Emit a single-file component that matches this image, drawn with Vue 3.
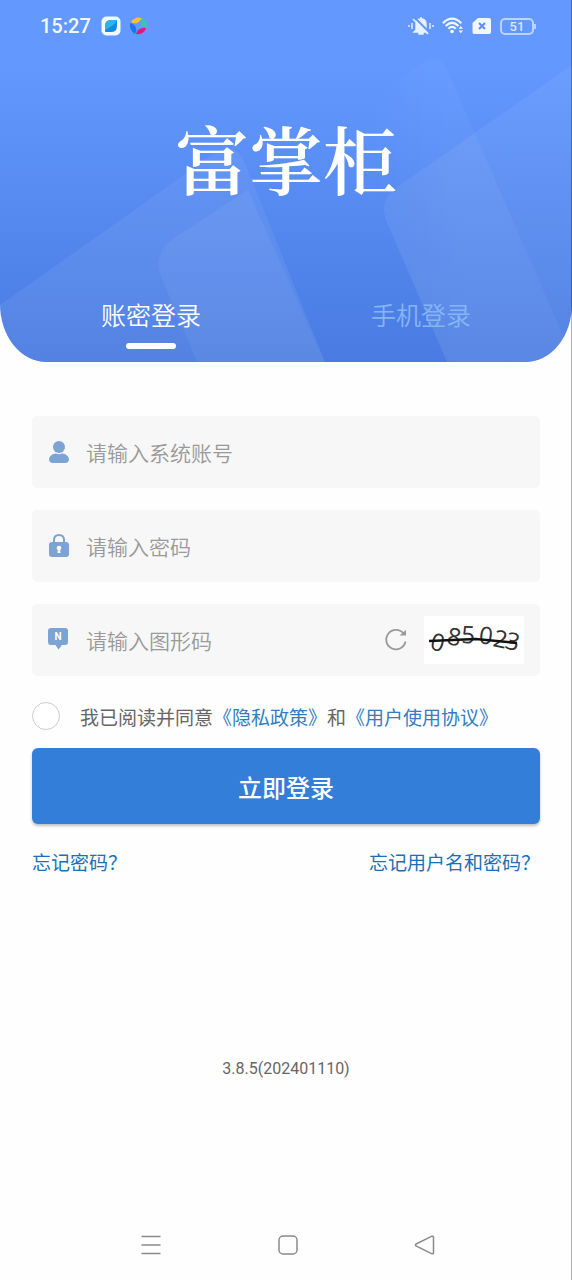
<template>
  <div class="page">
    <header class="hero">
      <svg class="hero-shapes" viewBox="0 0 572 362" preserveAspectRatio="none" aria-hidden="true">
        <defs>
          <linearGradient id="fade" gradientUnits="userSpaceOnUse" x1="365" y1="0" x2="460" y2="0">
            <stop offset="0" stop-color="#fff" stop-opacity="0" />
            <stop offset="1" stop-color="#fff" stop-opacity="0.04" />
          </linearGradient>
        </defs>
        <path d="M0 305 L215 153 Q236 140 246 166 L325 362 H0Z" fill="#fff" fill-opacity="0.06" />
        <path d="M197 362 L161 277 Q152 253 174 238 L248 190 L325 362Z" fill="#fff" fill-opacity="0.05" />
        <path d="M365 103 L423 62 Q439 52 448 72 L562 333 L572 362 H447 L386 220 Z" fill="url(#fade)" />
        <path d="M572 65 L396 188 Q379 201 386 220 L447 362 H572Z" fill="#fff" fill-opacity="0.06" />
      </svg>

      <div class="status-bar">
        <div class="status-group">
          <span class="clock">15:27</span>
          <svg width="20" height="20" viewBox="0 0 20 20">
            <rect x="0.5" y="0.5" width="19" height="19" rx="5" fill="#f2faff" />
            <path d="M4 10 Q4 4 10 4 H16 V10 Q16 16 10 16 H5 Q4 16 4 15Z" fill="#1688e0" />
            <path d="M4 10 Q4 4 10 4 H16 Q14 9 4 14Z" fill="#32b3e6" />
          </svg>
          <svg width="20" height="20" viewBox="0 0 20 20">
            <path d="M2 6 Q6 0 13 2 Q11 6 8 7 Q5 8 2 6Z" fill="#fdc02f" />
            <path d="M13 2 Q19 5 18 12 Q14 12 12 8 Q11 5 13 2Z" fill="#35c9b5" />
            <path d="M1 7 Q6 8 7 12 Q8 15 6 18 Q0 14 1 7Z" fill="#1677f2" />
            <path d="M17 12 Q15 19 7 18 Q8 14 11 13 Q14 11 17 12Z" fill="#ec1278" />
          </svg>
        </div>
        <div class="status-group status-right">
          <svg width="26" height="20" viewBox="0 0 26 20" fill="none" stroke="#e9f1ff" stroke-width="1.4">
            <path d="M8 14 V8 Q8 3 13 3 Q18 3 18 8 V14 L20 16 H6Z M11 17 H15 V18 H11Z M12 2 H14" fill="#e9f1ff" />
            <path d="M6 1 L22 17" stroke="#6298ff" stroke-width="2" />
            <path d="M5 3 L20 18" stroke-width="1.6" />
            <path d="M4 7 V13 M1 9 V11 M22 7 V13 M25 9 V11" />
          </svg>
          <svg width="22" height="20" viewBox="0 0 24 20" fill="none" stroke="#f1f6ff" stroke-width="2.4">
            <path d="M1 7 Q11 -3 21 7 M4 10 Q11 3 18 10 M7 13 Q11 9 15 13" />
            <circle cx="11" cy="16" r="2" fill="#f1f6ff" stroke="none" />
            <path d="M18 13 L20.5 10 L23 13Z M18 15 H23 L20.5 18Z" fill="#f1f6ff" stroke="none" />
          </svg>
          <svg width="20" height="18" viewBox="0 0 20 18">
            <path d="M6 1 H17 Q19 1 19 3 V15 Q19 17 17 17 H2 Q0.5 17 0.5 15 V6Z" fill="#f1f6ff" />
            <path d="M7 6 L13 12 M13 6 L7 12" stroke="#5c8fee" stroke-width="2" />
          </svg>
          <span class="battery">51</span>
        </div>
      </div>

      <h1 class="logo">富掌柜</h1>

      <nav class="tabs">
        <button
          v-for="tab in tabs"
          :key="tab.id"
          type="button"
          class="tab"
          :class="{ active: activeTab === tab.id }"
          @click="activeTab = tab.id"
        >
          {{ tab.label }}
        </button>
      </nav>
    </header>

    <form class="login-form" @submit.prevent>
      <div class="field">
        <label for="account" aria-label="系统账号">
          <svg width="22" height="24" viewBox="0 0 22 24" fill="#7ba3d3">
            <circle cx="11" cy="7" r="6" />
            <path d="M1 19 Q2 14 8 13.5 Q11 15 14 13.5 Q20 14 21 19 Q21 23 17 23 H5 Q1 23 1 19Z" />
          </svg>
        </label>
        <input id="account" v-model="account" type="text" placeholder="请输入系统账号" />
      </div>

      <div class="field">
        <label for="password" aria-label="密码">
          <svg width="22" height="24" viewBox="0 0 22 24">
            <path d="M6 10 V6 Q6 1 11 1 Q16 1 16 6 V10" fill="none" stroke="#7ba3d3" stroke-width="2" />
            <rect x="1" y="8" width="20" height="15" rx="3" fill="#7ba3d3" />
            <circle cx="11" cy="14" r="2.3" fill="#fff" />
            <path d="M10 14 H12 L12.5 19 H9.5Z" fill="#fff" />
          </svg>
        </label>
        <input id="password" v-model="password" type="password" placeholder="请输入密码" />
      </div>

      <div class="field">
        <label for="captcha" aria-label="图形码">
          <svg width="22" height="24" viewBox="0 0 22 24">
            <path d="M3 0 H17 Q20 0 20 3 V14 Q20 17 17 17 H14 L10.5 21.5 L7.5 17 H3 Q0 17 0 14 V3 Q0 0 3 0Z" fill="#7ba3d3" />
            <text x="10" y="12" text-anchor="middle" class="badge-letter">N</text>
          </svg>
        </label>
        <input id="captcha" v-model="captcha" type="text" placeholder="请输入图形码" />
        <button type="button" class="refresh" aria-label="刷新">
          <svg width="24" height="24" viewBox="0 0 24 24" fill="none" stroke="#999" stroke-width="1.8">
            <path d="M21.5 13.5 A9.7 9.7 0 1 1 19.5 5.5" />
            <path d="M15.5 7.5 H22 V2 Z" fill="#999" stroke="none" />
          </svg>
        </button>
        <svg class="captcha" width="100" height="48" viewBox="0 0 100 48">
          <rect width="100" height="48" fill="#fff" />
          <text
            class="captcha-text"
            x="5 22 37 54 68 80"
            y="33 28 27 27 30 32"
            rotate="14 10 2 8 12 14"
          >085023</text>
          <path d="M5 25 L52 23 L93 27" fill="none" stroke="#111" stroke-width="2.6" />
        </svg>
      </div>

      <div class="agreement">
        <input id="agree" v-model="agreed" type="checkbox" />
        <p>
          <label for="agree">我已阅读并同意</label><a href="#">《隐私政策》</a>和<a href="#">《用户使用协议》</a>
        </p>
      </div>

      <button type="submit" class="submit">立即登录</button>

      <div class="links">
        <a href="#">忘记密码？</a>
        <a href="#">忘记用户名和密码？</a>
      </div>
    </form>

    <p class="version">3.8.5(202401110)</p>

    <footer class="system-nav">
      <button type="button" aria-label="菜单">
        <svg width="22" height="22" viewBox="0 0 22 22" fill="none" stroke="#8a8a8a" stroke-width="1.5">
          <path d="M1.5 2.5 H20.5 M1.5 11 H20.5 M1.5 19.5 H20.5" />
        </svg>
      </button>
      <button type="button" aria-label="主页">
        <svg width="22" height="22" viewBox="0 0 22 22" fill="none" stroke="#8a8a8a" stroke-width="1.5">
          <rect x="2" y="2" width="18" height="18" rx="4" />
        </svg>
      </button>
      <button type="button" aria-label="返回">
        <svg width="22" height="22" viewBox="0 0 22 22" fill="none" stroke="#8a8a8a" stroke-width="1.5">
          <path d="M2 10 L18 2.2 Q19.5 2 19.5 3.5 V18.5 Q19.5 20 18 19.8 L2 12 Q1 11 2 10Z" />
        </svg>
      </button>
    </footer>
  </div>
</template>

<script setup>
import { ref } from 'vue';

const tabs = [
  { id: 'password', label: '账密登录' },
  { id: 'phone', label: '手机登录' }
];

const activeTab = ref('password');
const account = ref('');
const password = ref('');
const captcha = ref('');
const agreed = ref(false);
</script>

<style>
body {
  margin: 0;
  background-color: #fefefe;
}
</style>

<style scoped>
.page {
  position: relative;
  display: flex;
  flex-direction: column;
  min-height: 100vh;
  font-family: "Noto Sans CJK SC", sans-serif;
  color: #666;
}

/* thin line on the right edge of the screen */
.page::after {
  content: '';
  position: absolute;
  top: 0;
  right: 0;
  bottom: 0;
  width: 1px;
  background-color: rgba(0, 0, 0, 0.3);
}

button,
input {
  font-family: inherit;
  margin: 0;
  padding: 0;
  border: none;
  background: none;
}

button {
  cursor: pointer;
}

svg {
  display: block;
}

a {
  text-decoration: none;
}

.hero {
  position: relative;
  overflow: hidden;
  border-radius: 0 0 46px 46px / 0 0 58px 58px;
  background: linear-gradient(#6399ff 0%, #6298ff 18%, #497be1 100%);
}

.hero-shapes {
  position: absolute;
  inset: 0;
  width: 100%;
  height: 100%;
}

.status-bar {
  position: relative;
  display: flex;
  justify-content: space-between;
  align-items: center;
  height: 52px;
  padding: 0 38px 0 40px;
  font-family: Roboto, sans-serif;
}

.status-group {
  display: flex;
  align-items: center;
  gap: 8px;
}

.clock {
  margin-right: 2px;
  font-size: 20px;
  font-weight: 500;
  line-height: 24px;
  color: #f4f8ff;
}

.battery {
  position: relative;
  box-sizing: border-box;
  width: 34px;
  height: 17px;
  border: 2px solid #bdd4ff;
  border-radius: 5px;
  font-size: 13px;
  font-weight: 500;
  line-height: 13px;
  text-align: center;
  color: #dce8ff;
}

.battery::after {
  content: '';
  position: absolute;
  top: 4px;
  right: -4px;
  width: 2px;
  height: 5px;
  background-color: #bdd4ff;
}

.logo {
  position: relative;
  margin: 0;
  font-family: "Noto Serif CJK SC", "Noto Sans CJK SC", serif;
  font-size: 74px;
  font-weight: 600;
  line-height: 210px;
  text-align: center;
  color: #fff;
}

.tabs {
  position: relative;
  display: flex;
  padding: 10px 16px 6px;
}

.tab {
  position: relative;
  flex: 1;
  height: 84px;
  font-size: 25px;
  font-weight: 350;
  line-height: 84px;
  color: #86b5f5;
}

.tab.active {
  color: #fff;
}

.tab.active::after {
  content: '';
  position: absolute;
  bottom: 7px;
  left: 50%;
  width: 50px;
  height: 6px;
  margin-left: -25px;
  border-radius: 3px;
  background-color: #fff;
}

.login-form {
  display: flex;
  flex-direction: column;
  padding: 54px 32px 0;
}

.field {
  display: flex;
  align-items: center;
  height: 72px;
  margin-bottom: 22px;
  padding: 0 16px;
  border-radius: 5px;
  background-color: #f7f7f7;
}

.field input {
  flex: 1;
  min-width: 0;
  height: 100%;
  margin-left: 16px;
  font-size: 21px;
  font-weight: 350;
  color: #333;
  outline: none;
}

.field input::placeholder {
  color: #999;
  opacity: 1;
}

.badge-letter {
  font-family: Roboto, sans-serif;
  font-size: 10px;
  font-weight: 700;
  fill: #fff;
}

.refresh {
  margin-right: 16px;
}

.captcha-text {
  font-family: "Open Sans", sans-serif;
  font-size: 24px;
  fill: #333;
}

.agreement {
  display: flex;
  align-items: center;
  gap: 20px;
  height: 36px;
  margin-bottom: 14px;
}

.agreement input {
  appearance: none;
  box-sizing: border-box;
  flex: none;
  width: 28px;
  height: 28px;
  border: 1px solid #ccc;
  border-radius: 50%;
  background-color: #fff;
}

.agreement input:checked {
  border-color: #327ed8;
  background-color: #327ed8;
}

.agreement p {
  margin: 0;
  padding-top: 2px;
  font-size: 19px;
  line-height: 28px;
}

.agreement a {
  color: #327dc0;
}

.submit {
  height: 76px;
  border-radius: 6px;
  background-color: #327ed8;
  box-shadow: 0 2px 3px rgba(0, 0, 0, 0.25);
  font-size: 24px;
  font-weight: 500;
  color: #fff;
}

.links {
  display: flex;
  justify-content: space-between;
  margin-top: 24px;
  font-size: 19px;
  line-height: 28px;
}

.links a {
  color: #1a70b8;
}

.version {
  margin: auto 0 0;
  padding-bottom: 129px;
  font-family: Roboto, sans-serif;
  font-size: 16px;
  line-height: 24px;
  text-align: center;
}

.system-nav {
  display: flex;
  justify-content: center;
  align-items: center;
  gap: 115px;
  height: 70px;
  padding-left: 4px;
}
</style>
